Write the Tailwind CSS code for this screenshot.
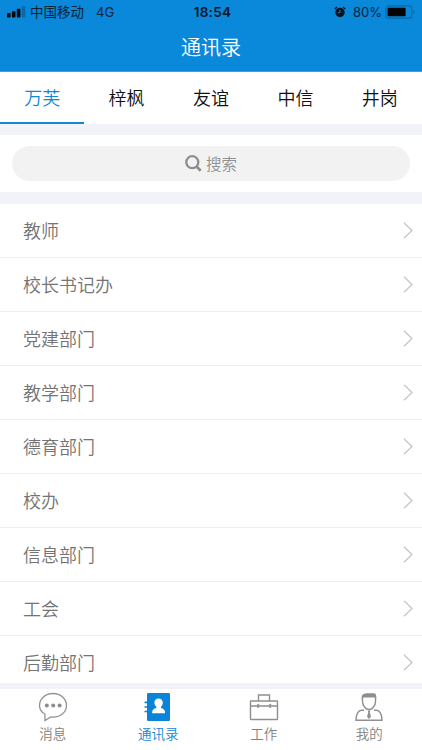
<!DOCTYPE html>
<html lang="zh-CN">
<head>
<meta charset="utf-8">
<title>通讯录</title>
<script src="https://cdn.jsdelivr.net/npm/@tailwindcss/browser@4"></script>
</head>
<body class="w-[422px] h-[750px] overflow-hidden flex flex-col bg-[#f2f3f8] font-['Liberation_Sans','Noto_Sans_CJK_SC',sans-serif]">
<header class="h-[72px] shrink-0 bg-[#0a88da] border-b border-[#3b9fe0] flex flex-col">
  <div class="h-6 shrink-0 grid grid-cols-3 items-center text-[13px] leading-[22px] text-[#06233a]">
    <div class="flex items-center pl-[7px]">
      <svg class="w-[19px] h-3 shrink-0" viewBox="0 0 19 12"><g fill="#04080c"><rect x="0" y="7" width="3.6" height="4.5" rx="1"/><rect x="4.9" y="5.2" width="3.6" height="6.3" rx="1"/><rect x="9.8" y="2.8" width="3.6" height="8.7" rx="1"/></g><rect x="14.7" y="0.3" width="3.6" height="11.2" rx="1" fill="#0869a6"/></svg>
      <span class="ml-1 pt-0.5 text-[13.5px] whitespace-nowrap">中国移动</span>
      <span class="ml-3 font-[Inter]">4G</span>
    </div>
    <div class="text-center pl-[3px] font-[Inter] font-semibold text-[13.5px] tracking-[0.3px] text-[#04192a]">18:54</div>
    <div class="flex items-center justify-end pr-[6px]">
      <svg class="w-3 h-3" viewBox="0 0 12 12"><circle cx="6" cy="6.5" r="4.7" fill="#05111b"/><path d="M.8 3 3 .9M11.2 3 9 .9" stroke="#05111b" stroke-width="1.4"/><path d="M6 3.7v3H4" fill="none" stroke="#0a88da" stroke-width="1"/></svg>
      <span class="ml-[7px] font-[Inter] text-[13px]">80%</span>
      <svg class="ml-[3px] w-[31px] h-[14px]" viewBox="0 0 31 14"><rect x=".8" y=".8" width="26" height="12.4" rx="3" fill="none" stroke="#0867a4" stroke-width="1.2"/><rect x="2.6" y="2.8" width="18" height="8.4" rx="1" fill="#020405"/><path d="M28.4 5c1.3.5 1.3 3.5 0 4z" fill="#0867a4"/></svg>
    </div>
  </div>
  <h1 class="h-[47px] pt-px flex items-center justify-center text-[20px] leading-none text-white font-[350]">通讯录</h1>
</header>

<nav class="h-[52px] shrink-0 bg-white grid grid-cols-5 text-[18px] text-[#111] text-center leading-[54px] font-[350]">
  <div class="h-[52px] text-[#1487d4] border-b-2 border-[#1487d4]">万芙</div>
  <div>梓枫</div>
  <div>友谊</div>
  <div>中信</div>
  <div>井岗</div>
</nav>

<section class="mt-[11px] h-[57px] shrink-0 bg-white pt-[11px] px-3">
  <div class="h-[35px] w-[398px] rounded-full bg-[#f2f2f2] flex items-center justify-center text-[15.5px] text-[#929292] font-[350]">
    <svg class="w-[17px] h-[17px] mr-1" viewBox="0 0 17 17" fill="none" stroke="#8e8e8e"><circle cx="7.3" cy="7.2" r="6" stroke-width="2.3"/><path d="m11.5 11.5 4.2 4.2" stroke-width="2.8"/></svg>
    <span class="pt-0.5">搜索</span>
  </div>
</section>

<main id="list" class="mt-3 h-[479px] shrink-0 overflow-hidden bg-white text-[18px] text-[#747474] font-[350]"></main>

<footer class="border-t-[6px] border-[#f2f3f8] h-[67px] shrink-0 bg-white grid grid-cols-4 text-[13.5px] leading-[18px] text-[#828282] font-[350]">
  <div class="flex flex-col items-center pt-[3px]">
    <svg class="w-[30px] h-[30px]" viewBox="0 0 30 30"><path d="M6.9 22.2C3.4 20.2 1.5 17.1 1.5 13.6 1.5 6.8 7.4 1.5 15 1.5s13.5 5.3 13.5 12S22.600 25.200 15 25.200c-.8 0-1.600 0-2.300-.2L7 28.500z" fill="none" stroke="#929292" stroke-width="1.300"/><g fill="#8c8c8c"><circle cx="8.800" cy="13.600" r="2"/><circle cx="15.200" cy="13.600" r="2"/><circle cx="21.600" cy="13.600" r="2"/></g></svg>
    <span class="mt-1">消息</span>
  </div>
  <div class="flex flex-col items-center pt-[3px] text-[#1487d4]">
    <svg class="w-[30px] h-[30px]" viewBox="0 0 30 30"><rect x="4" y="1" width="23" height="28" rx="1.200" fill="#0a84d8"/><path d="M2.200 10.300h3M2.200 15h3M2.200 19.500h3" stroke="#0a84d8" stroke-width="1.700" stroke-linecap="round"/><path d="M15.600 6.500c2.600 0 4.200 1.800 4.200 4.200 0 1.600-.8 3-1.800 3.900v1.500c2.300.6 4.100 1.500 4.100 5.100H9.200c0-3.600 1.700-4.500 4.100-5.100v-1.500c-1.100-.9-1.900-2.300-1.900-3.900 0-2.400 1.600-4.200 4.200-4.200z" fill="#fff"/></svg>
    <span class="mt-1">通讯录</span>
  </div>
  <div class="flex flex-col items-center pt-[3px]">
    <svg class="w-[30px] h-[30px]" viewBox="0 0 30 30" fill="none" stroke="#8f8f8f" stroke-width="1.400"><rect x="1.500" y="9" width="27" height="18.500" rx=".6"/><path d="M9.500 9V3h11v6M1.500 14h6.500M10.500 14h9.500M22.500 14h6"/><rect x="8.300" y="12.300" width="1.900" height="3.200" rx=".8" fill="#8f8f8f" stroke-width=".8"/><rect x="20.300" y="12.300" width="1.900" height="3.200" rx=".8" fill="#8f8f8f" stroke-width=".8"/></svg>
    <span class="mt-1">工作</span>
  </div>
  <div class="flex flex-col items-center pt-[3px]">
    <svg class="w-[30px] h-[30px]" viewBox="0 0 30 30" fill="none" stroke="#8f8f8f" stroke-width="1.400"><path d="M8.500 5v4.500c0 4.500 3.500 8 6.500 8s6.500-3.500 6.500-8V5"/><path d="M7.800 7.500V3.800C9 1.800 11 1.200 14 1.200h6c1.200 0 2.200 1.200 2.200 3v3.300L21 5.500H9.200z" fill="#8f8f8f" stroke="none"/><path d="M10 18.300H7.500C4.500 18.300 2 22 2 28.300h26c0-6.300-2.500-10-5.500-10H20"/><path d="M13.700 18.500h2.600l-.5 2 1.200 4.300-2 2.200-2-2.200 1.200-4.300z" fill="#8f8f8f" stroke="none"/></svg>
    <span class="mt-1">我的</span>
  </div>
</footer>
<script>
const departments = ['教师', '校长书记办', '党建部门', '教学部门', '德育部门', '校办', '信息部门', '工会', '后勤部门'];
document.getElementById('list').innerHTML = departments.map(name => `
  <div class="h-[54px] flex items-center justify-between pl-[23px] pr-[9px] border-b border-[#eeeeee]">
    <span class="pt-[3px]">${name}</span>
    <svg class="w-[10px] h-[17px]" viewBox="0 0 10 17" fill="none" stroke="#c4c4c4" stroke-width="1.200"><path d="m1 .8 8 7.700-8 7.700"/></svg>
  </div>`).join('');
</script>
</body>
</html>
